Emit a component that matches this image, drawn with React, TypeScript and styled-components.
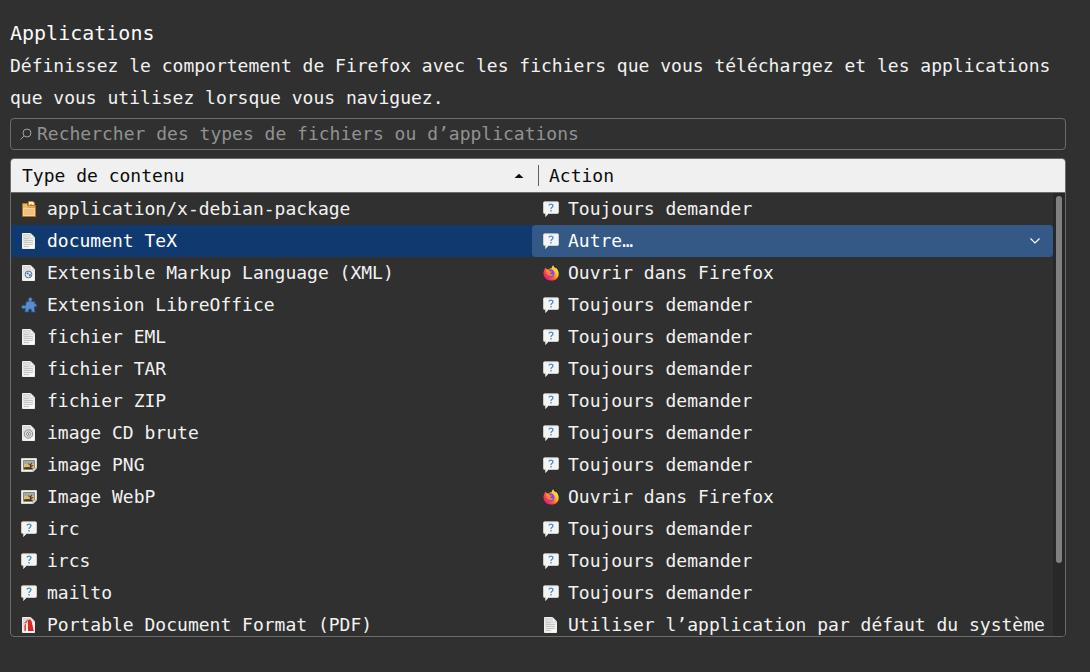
import React, { useId } from "react";
import styled, { createGlobalStyle } from "styled-components";

const GlobalStyle = createGlobalStyle`
  * { box-sizing: border-box; }
  body {
    margin: 0;
    background: #303030;
    color: #f2f2f2;
    font-family: "DejaVu Sans Mono", "Liberation Mono", monospace;
    font-size: 18px;
    line-height: 32px;
  }
`;

const Page = styled.main`
  display: flex;
  flex-direction: column;
  height: 100vh;
  min-height: 320px;
  padding: 18px 24px 35px 10px;
`;

const Title = styled.h1`
  margin: 0 0 2px;
  font-size: 20px;
  font-weight: 400;
  line-height: 30px;
  color: #fbfbfb;
`;

const Description = styled.p`
  margin: 0 0 4px;
`;

const SearchBox = styled.label`
  display: flex;
  flex: none;
  align-items: center;
  gap: 5px;
  height: 32px;
  padding: 0 9px;
  border: 1px solid #6b6b6b;
  border-radius: 4px;
  color: #a0a0a0;
`;

const SearchInput = styled.input`
  flex: 1;
  min-width: 0;
  padding: 0;
  border: 0;
  outline: 0;
  background: transparent;
  color: #f2f2f2;
  font: inherit;
  line-height: 30px;
  &::placeholder { color: #929292; opacity: 1; }
`;

const Panel = styled.div`
  position: relative;
  display: flex;
  flex: 1;
  min-height: 0;
  margin-top: 8px;
  border: 1px solid #6b6b6b;
  border-radius: 4px;
  overflow: hidden;
`;

const Table = styled.table`
  display: flex;
  flex: 1;
  flex-direction: column;
  min-width: 0;
`;

const Head = styled.thead`
  display: block;
  background: #f0f0f0;
  border-bottom: 1px solid #6b6b6b;
`;

const Body = styled.tbody`
  display: block;
  flex: 1;
  min-height: 0;
  margin-right: 12px;
  overflow-y: auto;
  scrollbar-width: none;
`;

const Row = styled.tr<{ $selected?: boolean }>`
  display: grid;
  grid-template-columns: 1fr 1fr;
  background: ${(p) => (p.$selected ? "#103a6f" : "transparent")};
  color: ${(p) => (p.$selected ? "#ffffff" : "inherit")};
`;

const HeadCell = styled.th<{ $divided?: boolean }>`
  display: flex;
  align-items: center;
  padding: 6px 0;

  &::before {
    content: "";
    width: 1px;
    height: 21px;
    margin-right: 10px;
    background: ${(p) => (p.$divided ? "#5f5f5f" : "transparent")};
  }
`;

const SortButton = styled.button`
  display: flex;
  flex: 1;
  align-items: center;
  justify-content: space-between;
  padding: 0 14px 0 0;
  border: 0;
  background: transparent;
  color: #0c0c0c;
  font: inherit;
  font-weight: 400;
  line-height: 21px;
`;

const TypeCell = styled.td`
  display: flex;
  align-items: center;
  gap: 10px;
  min-width: 0;
  height: 32px;
  padding: 0 0 0 10px;
  white-space: nowrap;
`;

const ActionCell = styled.td`
  display: flex;
  align-items: center;
  gap: 9px;
  min-width: 0;
  height: 32px;
  padding: 0 0 0 11px;
  white-space: nowrap;
`;

const MenuCell = styled(ActionCell)`
  border-radius: 4px;
  background: #345986;
  padding-right: 12px;
`;

const ActionSelect = styled.select`
  flex: 1;
  min-width: 0;
  height: 32px;
  padding: 0;
  border: 0;
  outline: 0;
  appearance: none;
  background: transparent;
  color: #ffffff;
  font: inherit;
`;

const ScrollTrack = styled.div`
  position: absolute;
  top: 34px;
  right: 0;
  bottom: 0;
  width: 12px;
  padding: 3px;
  background: #282828;
`;

const ScrollThumb = styled.div`
  height: 84%;
  border-radius: 3px;
  background: #808080;
`;

const Glyph = styled.svg`
  display: block;
  flex: none;
`;

type IconKind = "package" | "page" | "xml" | "puzzle" | "disc" | "image" | "ask" | "pdf" | "firefox";

function PageShape({ id }: { id: string }) {
  return (
    <>
      <defs>
        <linearGradient id={id} x1="0" y1="0" x2="0.6" y2="1">
          <stop offset="0" stopColor="#d2d2d0" />
          <stop offset="1" stopColor="#fafaf9" />
        </linearGradient>
      </defs>
      <path d="M1.5.5h8.2l3.800 3.800v11.200h-12z" fill={`url(#${id})`} stroke="#efefed" />
      <path d="M9.200.5v4.300h4.300z" fill="#fff" stroke="#b4b4b0" strokeWidth=".5" />
    </>
  );
}

function Icon({ kind }: { kind: IconKind }) {
  const id = useId().replace(/[^a-zA-Z0-9]/g, "");
  return (
    <Glyph width="16" height="16" viewBox="0 0 16 16" aria-hidden="true">
      {kind === "package" && (
        <>
          <path d="M1.500 2.500h5v2h8v11h-13z" fill="#e9b96e" stroke="#b87414" />
          <path d="M2.500 7.500h11v7h-11z" fill="#ecc182" stroke="#f6d39a" />
          <path d="M7.500.5h4.500l1.500 1.500v4H7.500z" fill="#fff1d8" stroke="#c4811f" strokeWidth=".8" />
          <path d="M8 4.500L10.500 2.500v1.200H13v1.600H8z" fill="#b87414" />
        </>
      )}
      {kind === "page" && (
        <>
          <PageShape id={id} />
          <path d="M3 5.500h5M3 7.500h9M3 9.500h9M3 11.500h9M3 13.500h5" stroke="#c6c6c3" />
        </>
      )}
      {kind === "xml" && (
        <>
          <PageShape id={id} />
          <circle cx="7.500" cy="9.500" r="3.400" fill="#dbe4ec" stroke="#56748f" />
          <path d="M5.500 8.500c.8-1.500 1.800-1 2.200-.6s-.4 1.300-1 1.700zM8 9.500l1.800-.5c.3 1.400-.8 2.300-1.800 2.500z" fill="#456985" />
        </>
      )}
      {kind === "disc" && (
        <>
          <PageShape id={id} />
          <circle cx="7.500" cy="9" r="4.200" fill="#dededc" stroke="#777" strokeWidth=".8" />
          <circle cx="7.500" cy="9" r="2" fill="#f6f6f6" stroke="#777" strokeWidth=".8" />
          <circle cx="7.500" cy="9" r=".7" fill="#555" />
        </>
      )}
      {kind === "puzzle" && (
        <path
          d="M5.500 4.500H8.200C8.600 4.200 7.400 3.400 7.400 2.400C7.400 1.300 8.300.6 9.300.6s1.900.7 1.900 1.800c0 1-1.200 1.800-.8 2.100h3.400v2.300c.3.300.7-.1 1.100-.1.500 0 .6.600.6 1.500s-.2 1.500-.7 1.500c-.4 0-.8-.4-1.200 0L13.300 12l.9 3H10.500c-.5-.5.200-.8.200-1.600 0-.7-.7-1.200-1.600-1.200s-1.700.5-1.700 1.200c0 .8.700 1.100.2 1.600H4l.4-3.600c-.3-.6-1 .3-2 .3C1.200 11.700.6 11 .6 10s.7-1.800 1.700-1.800 1.700.8 2.200.4z"
          fill="#5a8ccc"
          stroke="#2c5590"
          strokeWidth=".8"
        />
      )}
      {kind === "image" && (
        <>
          <path d="M.5 1.500h15v9.700l-3.500 3.300H.5z" fill="#f2f2ee" stroke="#d3d4ce" />
          <path d="M2.500 3.500h11v7l-1.500 2H2.500z" fill="#e3b870" stroke="#85867f" />
          <path d="M3 4h10v3H3z" fill="#aaa89c" />
          <path d="M3 12v-1.500l3-.5 2.800.3.200-1.800-2-1.500.5-.7L9 7.500l1.300-1.700.7.4-1 2.300 2-.5.3.700-2 1.200v.8l1.700.5-.7.800z" fill="#443b30" />
          <path d="M15.500 11.200H12v3.300z" fill="#fff" stroke="#888a85" strokeWidth=".6" />
        </>
      )}
      {kind === "ask" && (
        <>
          <path d="M1.500.8h13a1 1 0 0 1 1 1v9.700a1 1 0 0 1-1 1H5.500L2.600 15.500v-3H1.500a1 1 0 0 1-1-1V1.800a1 1 0 0 1 1-1z" fill="#f4f4f2" stroke="#d9d9d4" strokeWidth=".8" />
          <path d="M6 4.600C6 2.700 10 2.600 10 4.700c0 1.400-2 1.500-2 3.200" fill="none" stroke="#4a88d0" strokeWidth="1.300" />
          <path d="M7.300 9h1.400v1.400H7.300z" fill="#4a88d0" />
        </>
      )}
      {kind === "pdf" && (
        <>
          <PageShape id={id} />
          <path d="M7 3.500c1.200-1.700 2.800-1.300 3.500.5L12.800 14H7z" fill="#e02424" />
          <path d="M3.300 14V8.500L5 6v8zM2.500 6.500l5-5-1.500 4z" fill="#ef4a45" />
        </>
      )}
      {kind === "firefox" && (
        <>
          <defs>
            <linearGradient id={id} x1=".9" y1="0.15" x2=".15" y2=".85">
              <stop offset="0" stopColor="#fff04a" />
              <stop offset=".35" stopColor="#ffb52c" />
              <stop offset=".65" stopColor="#ff5a3c" />
              <stop offset="1" stopColor="#f01a6e" />
            </linearGradient>
          </defs>
          <path d="M2.400 2.600l1.300 1.700c.8-.2 1.500-.2 2.200 0C6.600 3.400 7.500 3 8.600 3.200c.2-1.200.7-2.200 1.600-2.900.3 1.700 1.500 2.100 2.500 3.200.2-.3.200-.6.100-1 4.700 4.300 4 12.900-4.500 13.100C1.300 15.800-1.200 8.700 1.500 4.700c.2-.8.500-1.500.9-2.100z" fill={`url(#${id})`} />
          <path d="M6 4.300c3-.8 5.600 1.500 5.600 4.300 0 2.200-1.600 3.700-3.600 3.700s-3.600-1.500-3.600-3.500z" fill="#8a45d8" />
          <path d="M2.800 5.300c2-.8 3.800-.3 4.500 1.200h1.900c-.2 1-1.900 1-2 1.800.2 1.400 2.100 1.500 3.300.6-.5 3-7 3.500-7.700-3.600z" fill="#ff8a30" />
        </>
      )}
    </Glyph>
  );
}

const ASK = "Toujours demander";
const OPEN = "Ouvrir dans Firefox";

type Entry = { icon: IconKind; type: string; actionIcon: IconKind; action: string; selected?: boolean };

const entries: Entry[] = [
  { icon: "package", type: "application/x-debian-package", actionIcon: "ask", action: ASK },
  { icon: "page", type: "document TeX", actionIcon: "ask", action: "Autre…", selected: true },
  { icon: "xml", type: "Extensible Markup Language (XML)", actionIcon: "firefox", action: OPEN },
  { icon: "puzzle", type: "Extension LibreOffice", actionIcon: "ask", action: ASK },
  { icon: "page", type: "fichier EML", actionIcon: "ask", action: ASK },
  { icon: "page", type: "fichier TAR", actionIcon: "ask", action: ASK },
  { icon: "page", type: "fichier ZIP", actionIcon: "ask", action: ASK },
  { icon: "disc", type: "image CD brute", actionIcon: "ask", action: ASK },
  { icon: "image", type: "image PNG", actionIcon: "ask", action: ASK },
  { icon: "image", type: "Image WebP", actionIcon: "firefox", action: OPEN },
  { icon: "ask", type: "irc", actionIcon: "ask", action: ASK },
  { icon: "ask", type: "ircs", actionIcon: "ask", action: ASK },
  { icon: "ask", type: "mailto", actionIcon: "ask", action: ASK },
  {
    icon: "pdf",
    type: "Portable Document Format (PDF)",
    actionIcon: "page",
    action: "Utiliser l’application par défaut du système",
  },
];

export default function App() {
  return (
    <>
      <GlobalStyle />
      <Page>
        <Title>Applications</Title>
        <Description>
          Définissez le comportement de Firefox avec les fichiers que vous téléchargez et les applications que vous
          utilisez lorsque vous naviguez.
        </Description>
        <SearchBox>
          <Glyph width="12" height="12" viewBox="0 0 12 12" aria-hidden="true">
            <circle cx="7" cy="5" r="4" fill="none" stroke="currentColor" />
            <path d="M4.200 7.800L.5 11.500" stroke="currentColor" />
          </Glyph>
          <SearchInput
            type="text"
            aria-label="Rechercher des types de fichiers ou d’applications"
            placeholder="Rechercher des types de fichiers ou d’applications"
          />
        </SearchBox>
        <Panel>
          <Table>
            <Head>
              <Row>
                <HeadCell scope="col" aria-sort="ascending">
                  <SortButton type="button">
                    Type de contenu
                    <Glyph width="10" height="6" viewBox="0 0 10 6" aria-hidden="true">
                      <path d="M.5 5L5 .8 9.500 5z" fill="#0c0c0c" />
                    </Glyph>
                  </SortButton>
                </HeadCell>
                <HeadCell scope="col" $divided>
                  <SortButton type="button">Action</SortButton>
                </HeadCell>
              </Row>
            </Head>
            <Body>
              {entries.map((entry) => (
                <Row key={entry.type} $selected={entry.selected}>
                  <TypeCell>
                    <Icon kind={entry.icon} />
                    {entry.type}
                  </TypeCell>
                  {entry.selected ? (
                    <MenuCell>
                      <Icon kind={entry.actionIcon} />
                      <ActionSelect aria-label={`Action pour ${entry.type}`} defaultValue={entry.action}>
                        <option>{entry.action}</option>
                      </ActionSelect>
                      <Glyph width="12" height="8" viewBox="0 0 12 8" aria-hidden="true">
                        <path d="M1.500 1.500L6 6l4.500-4.500" fill="none" stroke="#fff" strokeWidth="1.200" />
                      </Glyph>
                    </MenuCell>
                  ) : (
                    <ActionCell>
                      <Icon kind={entry.actionIcon} />
                      {entry.action}
                    </ActionCell>
                  )}
                </Row>
              ))}
            </Body>
          </Table>
          <ScrollTrack aria-hidden="true">
            <ScrollThumb />
          </ScrollTrack>
        </Panel>
      </Page>
    </>
  );
}
